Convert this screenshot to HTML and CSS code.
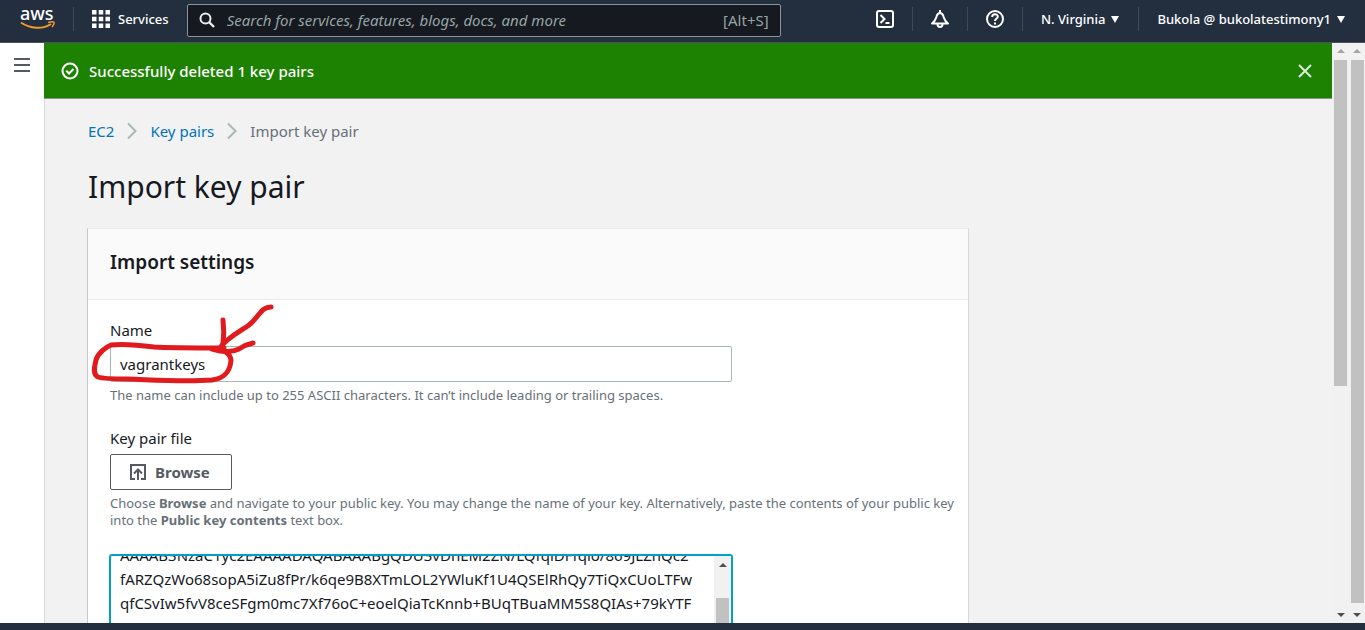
FILE: index.html
```
<!DOCTYPE html>
<html lang="en">
<head>
<meta charset="utf-8">
<title>Import key pair | EC2</title>
<link rel="stylesheet" href="styles.css">
</head>
<body>
<header class="topbar">
  <a class="logo" href="#" aria-label="AWS home">
    <span class="logo-text">aws</span>
    <svg class="logo-smile" width="36" height="9" viewBox="0 0 36 9" fill="none" stroke="#f29a2e"><path d="M1 1.500C10 8 23 8.500 31 3" stroke-width="2"/><path d="M28 1.500Q33 .2 34 1.300Q34.500 3 32 6" stroke-width="1.500"/></svg>
  </a>
  <button class="services" type="button">
    <svg width="18" height="18" viewBox="0 0 18 18" fill="#fff"><path d="M0 0h4.500v4.500H0zM6.750 0h4.500v4.500h-4.500zM13.500 0H18v4.500h-4.500zM0 6.750h4.500v4.500H0zM6.750 6.750h4.500v4.500h-4.500zM13.500 6.750H18v4.500h-4.500zM0 13.500h4.500V18H0zM6.750 13.500h4.500V18h-4.500zM13.500 13.500H18V18h-4.500z"/></svg>
    Services
  </button>
  <label class="search">
    <svg width="16" height="16" viewBox="0 0 16 16" fill="none" stroke="#eaeded" stroke-width="2"><circle cx="6.500" cy="6.500" r="5"/><path d="M10 10l5 5" stroke-width="2.400"/></svg>
    <input class="search-input" type="search" aria-label="Search" placeholder="Search for services, features, blogs, docs, and more">
    <span class="shortcut">[Alt+S]</span>
  </label>
  <nav class="tools">
    <button class="tool" type="button" aria-label="CloudShell"><svg width="20" height="20" viewBox="0 0 20 20" fill="none" stroke="#fff" stroke-width="2"><rect x="2" y="2" width="16" height="16" rx="2"/><path d="M5.500 6l4 4-4 4M10.500 14h4"/></svg></button>
    <button class="tool" type="button" aria-label="Notifications"><svg width="20" height="20" viewBox="0 0 20 20" fill="none" stroke="#fff" stroke-width="2" stroke-linejoin="round"><path d="M10 1v3"/><path d="M2 14.500h16C14.500 12 14.500 10.500 13.500 7.500C12.800 5.200 12 4 10 4S7.200 5.200 6.500 7.500C5.500 10.500 5.500 12 2 14.500z"/><path d="M7.500 15c0 4 5 4 5 0"/></svg></button>
    <button class="tool" type="button" aria-label="Help"><svg width="20" height="20" viewBox="0 0 20 20" fill="none" stroke="#fff" stroke-width="2"><circle cx="10" cy="10" r="8"/><path d="M7.200 8c0-3.800 5.600-3.500 5.600-.3C12.800 9.500 10 9.500 10 12"/><path d="M10 13.500v2"/></svg></button>
    <button class="menu region" type="button">N. Virginia <span class="caret"></span></button>
    <button class="menu account" type="button">Bukola @ bukolatestimony1 <span class="caret"></span></button>
  </nav>
</header>
<div class="shell">
  <aside class="rail">
    <button class="burger" type="button" aria-label="Open navigation"><svg width="16" height="14" viewBox="0 0 16 14" stroke="#545b64" stroke-width="2"><path d="M0 1h16M0 7h16M0 13h16"/></svg></button>
  </aside>
  <main class="main">
    <div class="flash" role="status">
      <svg width="18" height="18" viewBox="0 0 18 18" fill="none" stroke="#fff" stroke-width="2"><circle cx="9" cy="9" r="7.500"/><path d="M5.300 8.800l2.700 2.700 4.500-4.500"/></svg>
      <span class="flash-text">Successfully deleted 1 key pairs</span>
      <button class="close" type="button" aria-label="Dismiss"><svg width="14" height="14" viewBox="0 0 14 14" stroke="#dcecd6" stroke-width="2"><path d="M1 1l12 12M13 1L1 13"/></svg></button>
    </div>
    <div class="content">
      <nav class="crumbs" aria-label="Breadcrumbs">
        <a href="#">EC2</a>
        <svg width="10" height="18" viewBox="0 0 10 18" fill="none" stroke="#aab7b8" stroke-width="2"><path d="M1 1.500L8.500 9 1 16.500"/></svg>
        <a href="#">Key pairs</a>
        <svg width="10" height="18" viewBox="0 0 10 18" fill="none" stroke="#aab7b8" stroke-width="2"><path d="M1 1.500L8.500 9 1 16.500"/></svg>
        <span>Import key pair</span>
      </nav>
      <h1 class="title">Import key pair</h1>
      <section class="card">
        <h2 class="card-head">Import settings</h2>
        <form class="card-body">
          <div class="field">
            <label class="label" for="name">Name</label>
            <input class="text-input" id="name" type="text" value="vagrantkeys">
            <p class="hint">The name can include up to 255 ASCII characters. It can’t include leading or trailing spaces.</p>
            <svg class="marker" width="184" height="82" viewBox="0 0 184 82" fill="none" stroke="#e11b1d" stroke-width="5" stroke-linecap="round" stroke-linejoin="round"><path d="M130 44C115 44 75 44 60 43C45 41 25 40 17 41C12 43 4 49 2 56C0 64-1 71 4 73C10 75 24 75 34 75C62 76 90 78 118 76C133 74 136 65 137 57C137 50 130 45 118 44"/><path d="M177 3C167 3 165 13 155 21C147 27 132 34 126 44"/><path d="M129 16C130 24 130 32 129 40M118 45C128 48 137 49 145 45C151 41 154 40 159 39"/></svg>
          </div>
          <div class="field">
            <label class="label" for="browse">Key pair file</label>
            <button class="browse" id="browse" type="button"><svg width="16" height="16" viewBox="0 0 16 16" fill="none" stroke="#545b64" stroke-width="2"><path d="M5 15H1V1h14v14h-4M8 16V6M4 9.500l4-4 4 4"/></svg>Browse</button>
            <p class="hint">Choose <b>Browse</b> and navigate to your public key. You may change the name of your key. Alternatively, paste the contents of your public key into the <b>Public key contents</b> text box.</p>
          </div>
          <div class="key-box">
            <textarea class="key-text" id="key" aria-label="Public key contents" wrap="off" spellcheck="false">ssh-rsa
AAAAB3NzaC1yc2EAAAADAQABAAABgQDU3vDnEM2ZN/LQfqiDFfqlo/869JLZnQc2
fARZQzWo68sopA5iZu8fPr/k6qe9B8XTmLOL2YWluKf1U4QSElRhQy7TiQxCUoLTFw
qfCSvIw5fvV8ceSFgm0mc7Xf76oC+eoelQiaTcKnnb+BUqTBuaMM5S8QIAs+79kYTF




</textarea>
            <div class="scroll scroll-key"><span class="arrow-up dark"></span><span class="thumb"></span></div>
          </div>
        </form>
      </section>
    </div>
  </main>
  <div class="scroll scroll-inner"><span class="arrow-up"></span><span class="thumb"></span><span class="arrow-down"></span></div>
  <div class="scroll scroll-outer"><span class="arrow-up"></span><span class="thumb"></span><span class="arrow-down"></span></div>
</div>
<footer class="footer"></footer>
<script src="script.js"></script>
</body>
</html>
```
FILE: styles.css
```
* { box-sizing: border-box; }
body {
  margin: 0;
  height: 100vh;
  overflow: hidden;
  display: flex;
  flex-direction: column;
  font-family: "Noto Sans", "Open Sans", sans-serif;
  font-size: 15px;
  line-height: 20px;
  color: #16191f;
  background: #f2f2f2;
}
button, input, textarea { font: inherit; color: inherit; }
button { border: 0; padding: 0; background: none; }
svg { display: block; flex: none; }
h1, h2, p { margin: 0; }
a { color: #0073bb; text-decoration: none; }

.topbar {
  flex: none;
  display: flex;
  align-items: center;
  height: 43px;
  padding: 0 20px 4px;
  background: #232f3e;
  border-bottom: 1px solid #46535f;
  color: #fff;
  font-size: 13px;
  font-weight: 500;
}
.logo {
  width: 54px;
  height: 24px;
  border-right: 1px solid #3f4a57;
  color: #fff;
}
.logo-text {
  display: block;
  height: 14px;
  font: 500 18px/12px "Noto Sans", sans-serif;
}
.services {
  display: flex;
  align-items: center;
  gap: 8px;
  margin: 0 18px;
}
.search {
  flex: 0 1 594px;
  display: flex;
  align-items: center;
  gap: 12px;
  height: 33px;
  margin-top: 2px;
  padding: 0 11px;
  border: 1px solid #879596;
  border-radius: 2px;
  background: #16191f;
  color: #95a5a6;
  font-size: 15px;
  font-weight: 400;
}
.search-input {
  flex: 1;
  min-width: 0;
  border: 0;
  padding: 0;
  background: none;
}
.search-input::placeholder { color: #95a5a6; font-style: italic; }
.tools {
  display: flex;
  align-items: center;
  margin-left: auto;
}
.tool {
  width: 55px;
  height: 24px;
  display: grid;
  place-items: center;
  border-right: 1px solid #3f4a57;
}
.menu {
  display: flex;
  align-items: center;
  gap: 6px;
  height: 24px;
  white-space: nowrap;
}
.region {
  padding: 0 19px 0 18px;
  border-right: 1px solid #3f4a57;
}
.account { padding-left: 18px; }
.caret {
  border: 4px solid transparent;
  border-top: 7px solid #fff;
  border-bottom: 0;
}

.shell { flex: 1; min-height: 0; display: flex; }
.rail {
  flex: none;
  width: 44px;
  padding: 15px 14px;
  background: #fff;
}
.burger { display: block; }
.main { flex: 1; min-width: 0; overflow: hidden; }
.flash {
  display: flex;
  align-items: center;
  gap: 10px;
  height: 56px;
  padding: 0 20px 0 17px;
  background: #1d8102;
  border-bottom: 1px solid #879596;
  color: #fff;
  font-weight: 500;
}
.flash-text { flex: 1; }
.content {
  padding: 22px 43px 0 42px;
  border-left: 1px solid #d5dbdb;
}
.crumbs {
  display: flex;
  align-items: center;
  gap: 13px;
  padding-left: 1px;
  color: #687078;
}
.title {
  margin: 27px 0 22px;
  padding-left: 1px;
  font-size: 30px;
  line-height: 38px;
  font-weight: 400;
}
.card {
  max-width: 882px;
  background: #fff;
  border: 1px solid #d5dbdb;
  border-top-color: #eaeded;
  border-left-color: #c4caca;
}
.card-head {
  padding: 19px 22px 23px;
  background: #fafafa;
  border-bottom: 1px solid #eaeded;
  font-size: 19px;
  line-height: 28px;
  font-weight: 600;
}
.card-body {
  display: flex;
  flex-direction: column;
  gap: 24px;
  padding: 20px 8px 20px 22px;
}
.field { position: relative; }
.label { display: block; margin-bottom: 6px; }
.text-input {
  display: block;
  width: 100%;
  max-width: 622px;
  height: 36px;
  padding: 0 9px;
  border: 1px solid #aab7b8;
  border-radius: 2px;
}
.hint {
  margin-top: 5px;
  color: #687078;
  font-size: 13px;
  line-height: 17px;
}
.marker {
  position: absolute;
  left: -16px;
  top: -16px;
  overflow: visible;
  pointer-events: none;
}
.browse {
  display: flex;
  align-items: center;
  gap: 9px;
  height: 36px;
  padding: 0 21px 0 19px;
  border: 1px solid #545b64;
  border-radius: 2px;
  color: #545b64;
  font-weight: 700;
}
.key-box {
  display: flex;
  max-width: 622px;
  height: 160px;
  margin-top: 2px;
  border: 1px solid #00a1c9;
  border-radius: 2px;
  box-shadow: 0 0 0 1px #00a1c9;
  background: #fff;
}
.key-text {
  flex: 1;
  min-width: 0;
  border: 0;
  outline: 0;
  padding: 0 9px;
  overflow: hidden;
  resize: none;
  line-height: 24px;
  background: none;
}

.scroll {
  flex: none;
  display: flex;
  flex-direction: column;
  align-items: center;
  width: 17px;
  padding: 6px 0;
  background: #f1f1f1;
}
.scroll .thumb { width: 13px; background: #c1c1c1; }
.scroll-outer { width: 16px; }
.scroll-inner .thumb { height: 326px; margin: 7px 0 auto; }
.scroll-outer .thumb { flex: 1; margin: 7px 0 10px; }
.scroll-key { padding-top: 7px; }
.scroll-key .thumb { height: 60px; margin-top: 31px; }
.arrow-up, .arrow-down { border: 4px solid transparent; }
.arrow-up { border-top: 0; border-bottom-color: #a3a3a3; }
.arrow-up.dark { border-bottom-color: #505050; }
.arrow-down { border-bottom: 0; border-top-color: #505050; }
.footer { flex: none; height: 7px; background: #232f3e; }
```
FILE: script.js
```
document.getElementById("key").scrollTop = 37;
```
